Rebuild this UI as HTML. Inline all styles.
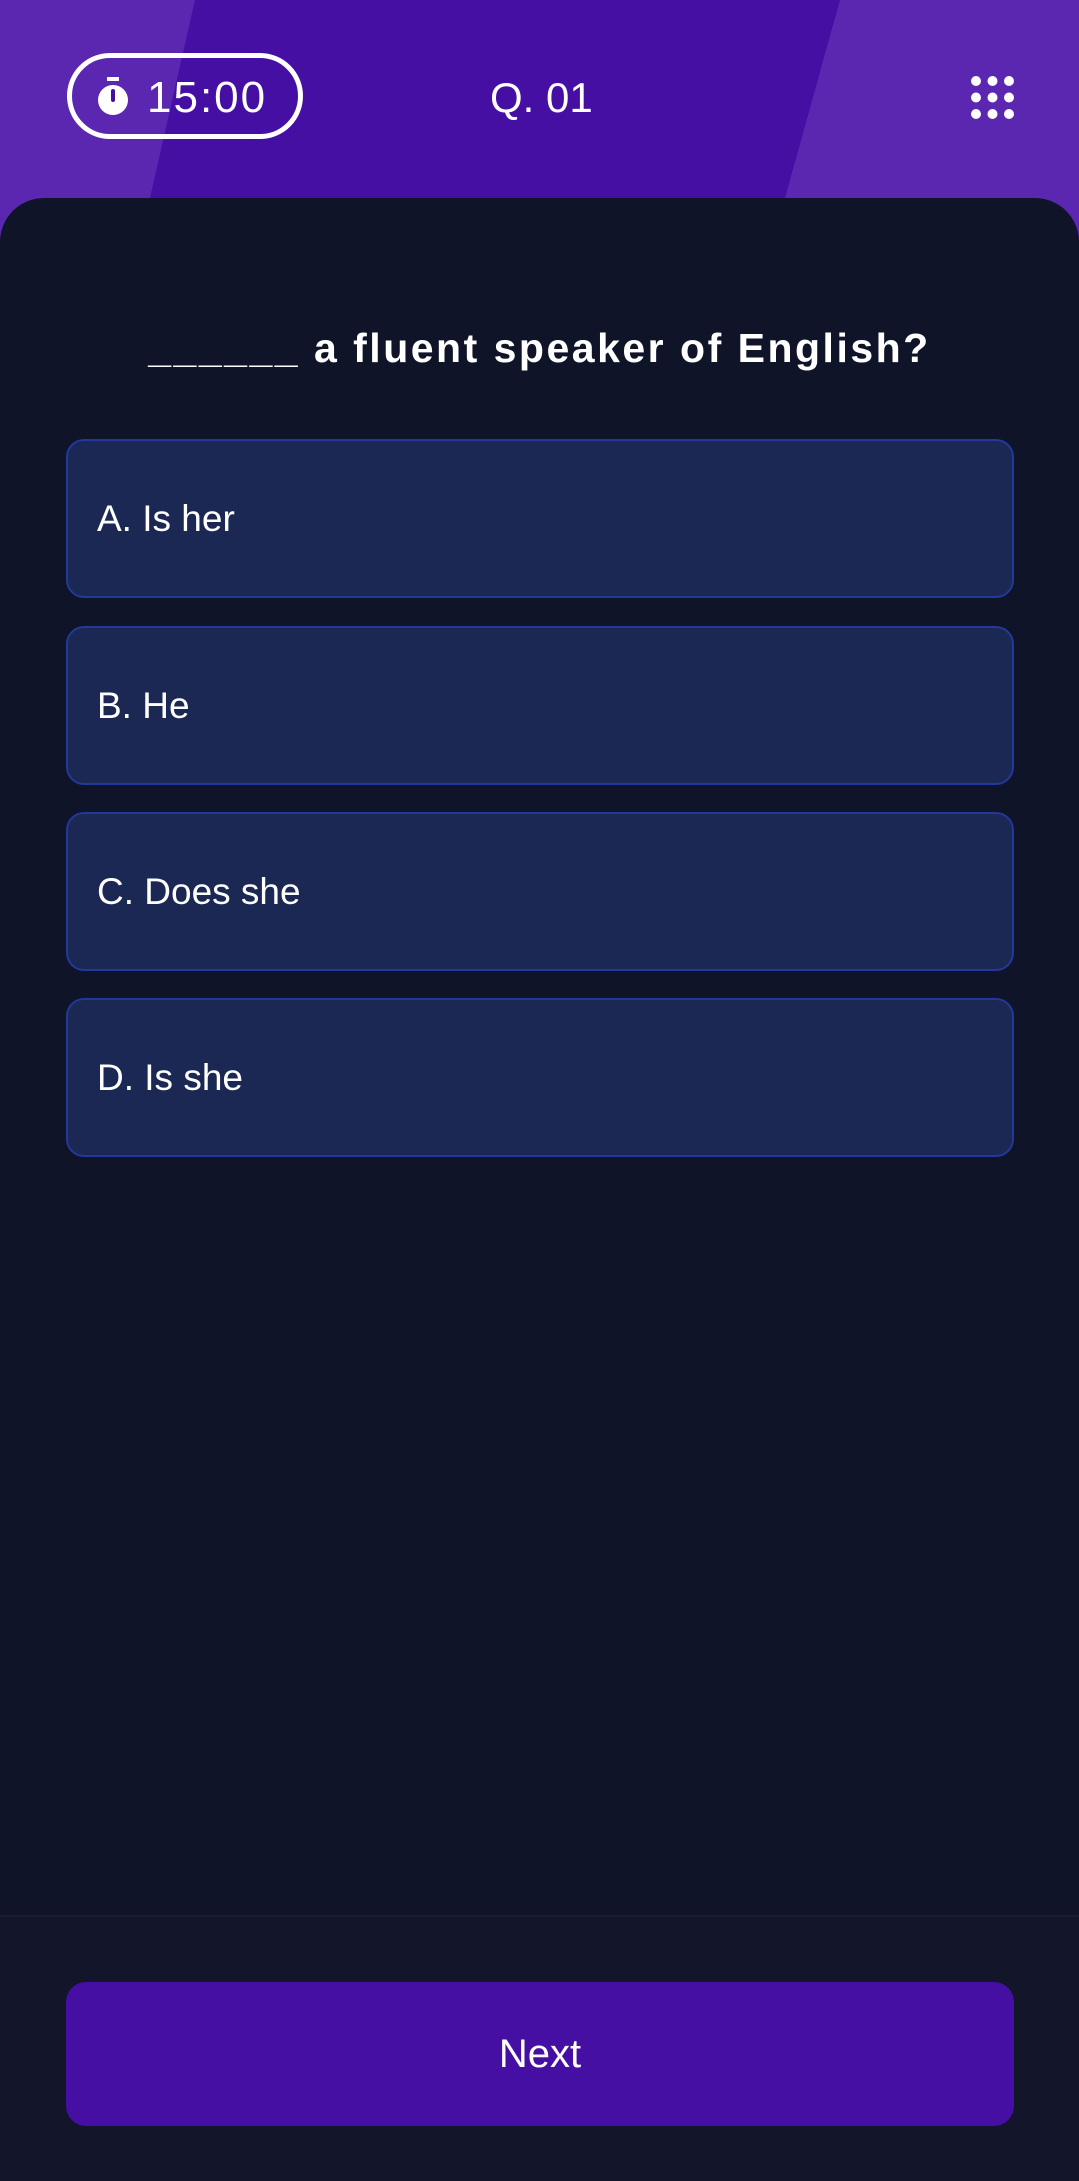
<!DOCTYPE html>
<html><head><meta charset="utf-8"><style>
*{margin:0;padding:0;box-sizing:border-box}
body{width:1079px;height:2181px;background:#13152a;font-family:"Liberation Sans",sans-serif;color:#fff;position:relative;overflow:hidden}
.hdr{position:absolute;left:0;top:0;width:1079px;height:260px;background:#5b27b0}
.card{position:absolute;left:0;top:198px;width:1079px;height:1718px;background:#0f1429;border-radius:44px 44px 0 0}
.pill{position:absolute;left:67px;top:53px;width:236px;height:86px;border:5px solid #fff;border-radius:43px}
.t{position:absolute;font-size:44px;line-height:44px}
.q{position:absolute;left:0;width:1079px;top:325px;text-align:center;font-size:41px;font-weight:bold;letter-spacing:2.5px}
.opt{position:absolute;left:66px;width:948px;height:159px;background:#1c2854;border:2px solid #22389a;border-radius:18px;font-size:37px;line-height:155px;padding-left:29px}
.sep{position:absolute;left:0;top:1915px;width:1079px;height:2px;background:#1d1a38}
.btn{position:absolute;left:66px;top:1982px;width:948px;height:144px;background:#440fa2;border-radius:20px;text-align:center;line-height:144px;font-size:40px}
</style></head><body>
<div class="hdr">
<svg width="1079" height="260" style="position:absolute;left:0;top:0"><polygon points="195,0 840,0 785,198 150,198" fill="#440fa2"/></svg>
</div>
<div class="pill"></div>
<svg style="position:absolute;left:95px;top:77px" width="36" height="40" viewBox="0 0 36 40"><rect x="12" y="0" width="12" height="4" fill="#fff"/><circle cx="18" cy="23" r="15" fill="#fff"/><path d="M18 23 L18 14" stroke="#440fa2" stroke-width="4" stroke-linecap="round"/></svg>
<div class="t" style="left:147px;top:76px;letter-spacing:2px">15:00</div>
<div class="t" style="left:490px;top:76px;font-size:42px">Q. 01</div>
<svg style="position:absolute;left:970px;top:75px" width="45" height="45" viewBox="0 0 45 45"><g fill="#fff"><circle cx="6" cy="6" r="5"/><circle cx="22.5" cy="6" r="5"/><circle cx="39" cy="6" r="5"/><circle cx="6" cy="22.5" r="5"/><circle cx="22.5" cy="22.5" r="5"/><circle cx="39" cy="22.5" r="5"/><circle cx="6" cy="39" r="5"/><circle cx="22.5" cy="39" r="5"/><circle cx="39" cy="39" r="5"/></g></svg>
<div class="card"></div>
<div class="q">______ a fluent speaker of English?</div>
<div class="opt" style="top:439px">A. Is her</div>
<div class="opt" style="top:626px">B. He</div>
<div class="opt" style="top:812px">C. Does she</div>
<div class="opt" style="top:998px">D. Is she</div>
<div class="sep"></div>
<div class="btn">Next</div>
</body></html>
